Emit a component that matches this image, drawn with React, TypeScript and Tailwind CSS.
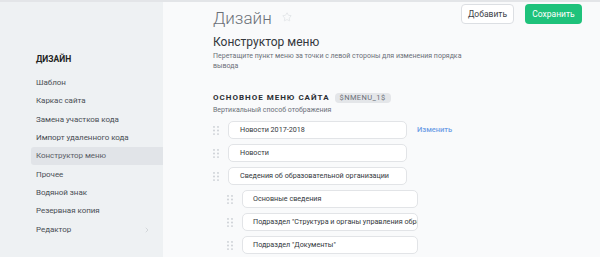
import { ChevronRight, Star } from 'lucide-react';

const sideItems = [
  'Шаблон',
  'Каркас сайта',
  'Замена участков кода',
  'Импорт удаленного кода',
  'Конструктор меню',
  'Прочее',
  'Водяной знак',
  'Резервная копия',
  'Редактор',
];

const rows = [
  { title: 'Новости 2017-2018', level: 0, edit: true },
  { title: 'Новости', level: 0 },
  { title: 'Сведения об образовательной организации', level: 0 },
  { title: 'Основные сведения', level: 1 },
  { title: 'Подраздел "Структура и органы управления образовательной организацией"', level: 1 },
  { title: 'Подраздел "Документы"', level: 1 },
];

function Handle() {
  return (
    <svg width="6" height="9" viewBox="0 0 6 9" className="shrink-0">
      {[0.9, 4.5, 8.1].map((y) => (
        <g key={y} fill="#c9cdd2">
          <circle cx="1" cy={y} r="0.9" />
          <circle cx="5" cy={y} r="0.9" />
        </g>
      ))}
    </svg>
  );
}

function Sidebar() {
  return (
    <aside className="w-[163px] shrink-0 bg-[#eef1f3] pl-[31px] pt-[51px]">
      <div className="pl-[5px] text-[8.5px] font-bold text-[#222] leading-[12px] mb-[9px]">ДИЗАЙН</div>
      {sideItems.map((item) => {
        const active = item === 'Конструктор меню';
        return (
          <div
            key={item}
            className={`flex items-center justify-between h-[18.3px] pl-[5px] pr-[12px] rounded-l-[3px] text-[8px] tracking-[-0.05px] text-[#4a4f55] ${
              active ? 'bg-[#e1e4e8] text-[#5b6067]' : ''
            }`}
          >
            <span>{item}</span>
            {item === 'Редактор' && <ChevronRight size={8} strokeWidth={1.5} className="text-[#b8bcc1]" />}
          </div>
        );
      })}
    </aside>
  );
}

export default function App() {
  return (
    <div
      className="w-[600px] h-[257px] overflow-hidden flex border-t-2 border-[#e3e5e8] bg-[#f9fafb]"
      style={{ fontFamily: 'Roboto, "Noto Sans", sans-serif' }}
    >
      <Sidebar />
      <main className="flex-1 pl-[50px] pr-[18px]">
        <div className="flex items-start justify-between pt-[2px]">
          <div className="flex items-center gap-[10px] pt-[3px]">
            <h1 className="text-[17px] font-light text-[#6b7078] leading-[22px]">Дизайн</h1>
            <Star size={10} strokeWidth={1.3} className="text-[#d6d9dd] -mt-[3px]" />
          </div>
          <div className="flex gap-[11px]">
            <button className="h-[20px] w-[53px] rounded-[4px] border border-[#dcdfe3] bg-white text-[8.5px] text-[#3d4147]">
              Добавить
            </button>
            <button className="h-[20px] w-[57px] rounded-[4px] bg-[#1ec27b] text-[8.5px] text-white">
              Сохранить
            </button>
          </div>
        </div>

        <h2 className="mt-[5px] text-[12px] leading-[16px] text-[#33373c]">Конструктор меню</h2>
        <p className="mt-[1px] w-[250px] text-[7px] leading-[10px] text-[#6b7078]">
          Перетащите пункт меню за точки с левой стороны для изменения порядка вывода
        </p>

        <div className="mt-[21px] flex items-center gap-[5px]">
          <span className="text-[8px] font-bold tracking-[1px] text-[#2b2f34]">ОСНОВНОЕ МЕНЮ САЙТА</span>
          <span className="h-[10px] px-[5px] rounded-[4px] bg-[#e4e6e9] text-[7.5px] leading-[10px] tracking-[0.4px] text-[#6b7078]">
            $NMENU_1$
          </span>
        </div>
        <div className="mt-[1px] text-[7px] leading-[10px] text-[#6b7078]">Вертикальный способ отображения</div>

        <div className="mt-[6px] flex flex-col gap-[5px]">
          {rows.map((row) => (
            <div key={row.title} className={`flex items-center ${row.level ? 'pl-[14px]' : ''}`}>
              <Handle />
              <div
                className={`ml-[9px] h-[18px] flex items-center rounded-[5px] border border-[#e2e4e7] bg-white overflow-hidden whitespace-nowrap text-[7.2px] text-[#33373c] ${
                  row.level ? 'w-[176px] pl-[10px]' : 'w-[179px] pl-[11px]'
                }`}
              >
                {row.title}
              </div>
              {row.edit && <span className="ml-[10px] text-[7.5px] font-medium text-[#6f9ee6]">Изменить</span>}
            </div>
          ))}
        </div>
      </main>
    </div>
  );
}
